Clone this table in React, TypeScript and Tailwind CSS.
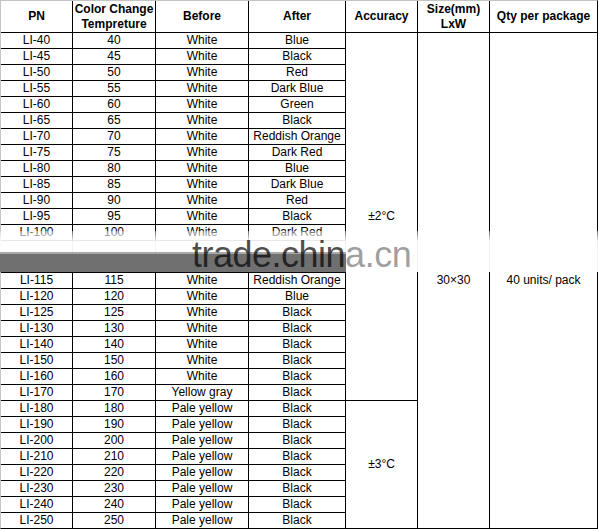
import React from "react";

const rows: [string, string, string, string][] = [
  ["LI-40", "40", "White", "Blue"],
  ["LI-45", "45", "White", "Black"],
  ["LI-50", "50", "White", "Red"],
  ["LI-55", "55", "White", "Dark Blue"],
  ["LI-60", "60", "White", "Green"],
  ["LI-65", "65", "White", "Black"],
  ["LI-70", "70", "White", "Reddish Orange"],
  ["LI-75", "75", "White", "Dark Red"],
  ["LI-80", "80", "White", "Blue"],
  ["LI-85", "85", "White", "Dark Blue"],
  ["LI-90", "90", "White", "Red"],
  ["LI-95", "95", "White", "Black"],
  ["LI-100", "100", "White", "Dark Red"],
  ["", "", "", ""],
  ["", "", "", ""],
  ["LI-115", "115", "White", "Reddish Orange"],
  ["LI-120", "120", "White", "Blue"],
  ["LI-125", "125", "White", "Black"],
  ["LI-130", "130", "White", "Black"],
  ["LI-140", "140", "White", "Black"],
  ["LI-150", "150", "White", "Black"],
  ["LI-160", "160", "White", "Black"],
  ["LI-170", "170", "Yellow gray", "Black"],
  ["LI-180", "180", "Pale yellow", "Black"],
  ["LI-190", "190", "Pale yellow", "Black"],
  ["LI-200", "200", "Pale yellow", "Black"],
  ["LI-210", "210", "Pale yellow", "Black"],
  ["LI-220", "220", "Pale yellow", "Black"],
  ["LI-230", "230", "Pale yellow", "Black"],
  ["LI-240", "240", "Pale yellow", "Black"],
  ["LI-250", "250", "Pale yellow", "Black"],
];

const cell = "bg-white flex items-center justify-center text-center whitespace-nowrap";
const head = "bg-white flex items-center justify-center text-center font-bold leading-[15px] whitespace-nowrap";

export default function App() {
  return (
    <div className="relative w-[599px] h-[529px] bg-white text-black text-[12px] leading-[15px]" style={{ fontFamily: '"Liberation Sans", Arial, sans-serif' }}>
      <div className="grid w-[598px] grid-cols-[71px_82px_92px_96px_71px_71px_107px] grid-rows-[31px_repeat(31,15px)] gap-px bg-black border border-black border-t-[#c4c4c4] border-l-[#c4c4c4]">
        <div className={head}>PN</div>
        <div className={head}>Color Change<br />Tempreture</div>
        <div className={head}>Before</div>
        <div className={head}>After</div>
        <div className={head}>Accuracy</div>
        <div className={head}>Size(mm)<br />LxW</div>
        <div className={head}>Qty per package</div>

        <div className={`${cell} col-start-5 row-[2/span_23]`}>±2°C</div>
        <div className={`${cell} col-start-5 row-[25/span_8]`}>±3°C</div>
        <div className={`${cell} col-start-6 row-[2/span_31]`}>30×30</div>
        <div className={`${cell} col-start-7 row-[2/span_31]`}>40 units/ pack</div>

        {rows.map((r, i) => (
          <React.Fragment key={i}>
            <div className={cell}>{r[0]}</div>
            <div className={cell}>{r[1]}</div>
            <div className={cell}>{r[2]}</div>
            <div className={cell}>{r[3]}</div>
          </React.Fragment>
        ))}
      </div>

      {/* scan fade + watermark band overlay */}
      <div className="absolute left-0 top-[231px] w-[599px] h-[41px] bg-linear-to-b from-white/40 via-white/95 via-25% to-white/95" />
      <div className="absolute left-0 top-[252px] w-[346px] h-[20px] bg-[#707070] border-t-2 border-[#a9a9a9]" />
      <div className="absolute left-[192px] top-[237px] text-[36px] leading-[36px] tracking-[-0.5px] whitespace-nowrap">
        <span className="text-black/70">trade.chin</span>
        <span className="text-black/40">a.cn</span>
      </div>
    </div>
  );
}
